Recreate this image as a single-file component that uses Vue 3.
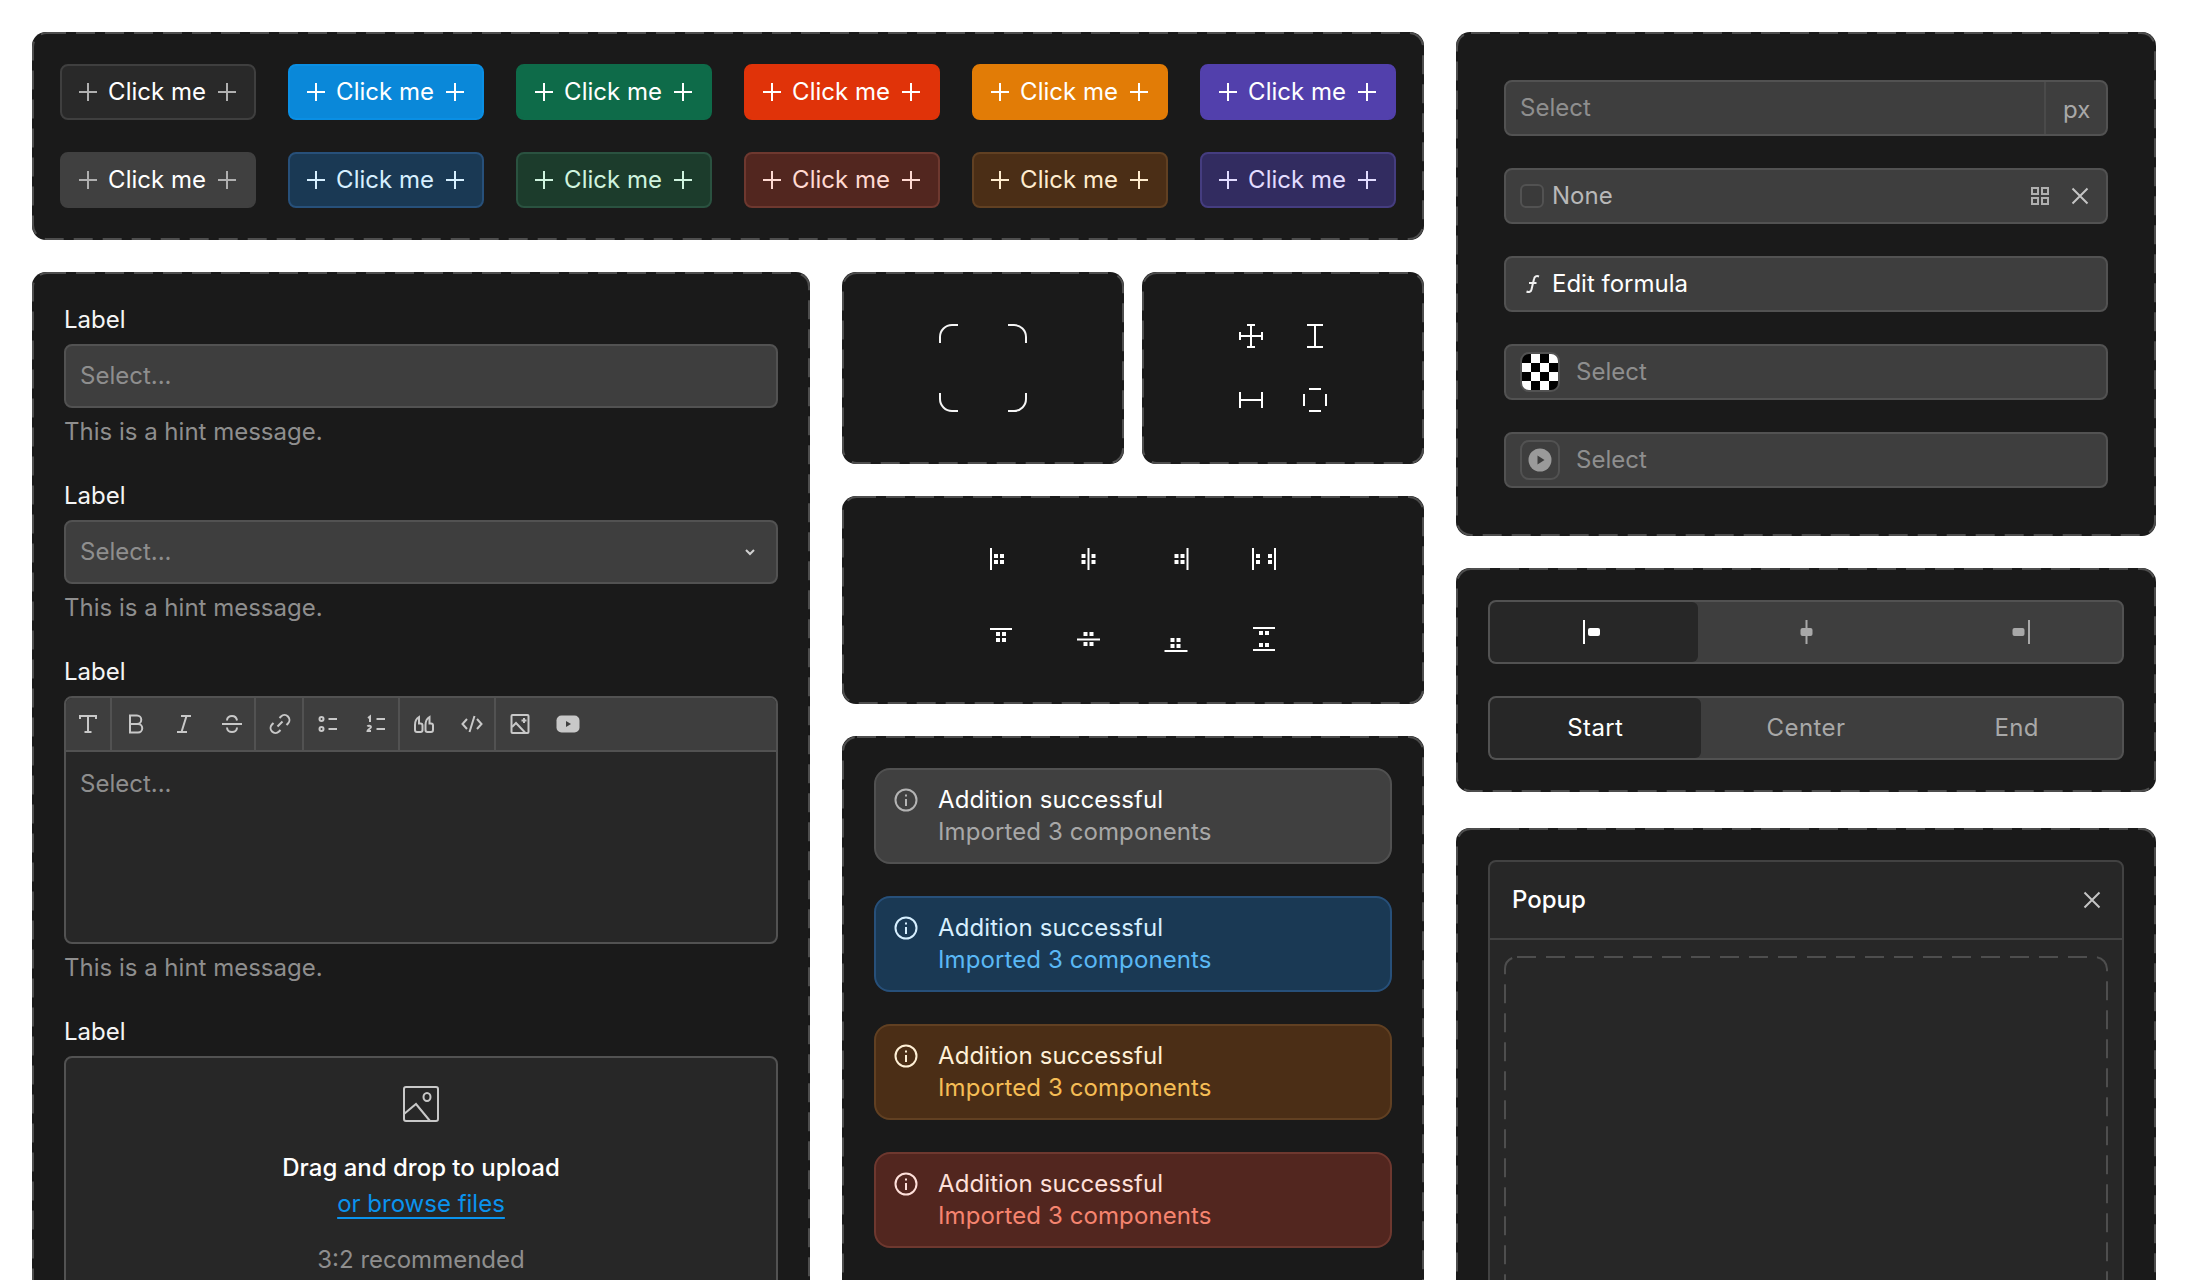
<template>
  <div class="page">
    <div class="main">
      <section class="card buttons">
        <svg class="dash"><rect /></svg>
        <button v-for="b in buttons" :key="b.id" class="btn" :class="b.cls">
          <svg class="plus" viewBox="0 0 24 24"><path d="M12 3v18M3 12h18" /></svg>
          <span>Click me</span>
          <svg class="plus" viewBox="0 0 24 24"><path d="M12 3v18M3 12h18" /></svg>
        </button>
      </section>

      <div class="lower">
        <section class="card form">
          <svg class="dash"><rect /></svg>

          <div class="field">
            <div class="label">Label</div>
            <div class="input placeholder">Select...</div>
            <div class="hint">This is a hint message.</div>
          </div>

          <div class="field">
            <div class="label">Label</div>
            <div class="input placeholder">
              Select...
              <svg class="caret" viewBox="0 0 12 12"><path d="M2 4l4 4 4-4" /></svg>
            </div>
            <div class="hint">This is a hint message.</div>
          </div>

          <div class="field">
            <div class="label">Label</div>
            <div class="editor">
              <div class="toolbar">
                <div class="tool-group">
                  <svg class="tool" viewBox="0 0 24 24"><path d="M4 7V4h16v3M12 4v16M8.500 20h7" /></svg>
                </div>
                <div class="tool-group">
                  <svg class="tool" viewBox="0 0 24 24"><path d="M6 3.500h7a4.200 4.200 0 0 1 0 8.500H6zM6 12h8a4.200 4.200 0 0 1 0 8.500H6z" /></svg>
                  <svg class="tool" viewBox="0 0 24 24"><path d="M9 4h10M5 20h10M14.500 4L9.500 20" /></svg>
                  <svg class="tool" viewBox="0 0 24 24"><path d="M2 12h20M17 8.500C16.500 5.500 14.500 4 12 4S7 5.500 7 8.500M7 15.500c0 3 2.500 4.500 5 4.500s5-1.500 5-4.500" /></svg>
                </div>
                <div class="tool-group">
                  <svg class="tool" viewBox="0 0 24 24"><path d="M11.500 6l1.500-1.500a4.950 4.950 0 0 1 7 7L18.500 13M12.500 18L11 19.500a4.950 4.950 0 0 1-7-7L5.500 11M9.500 14.500l5-5" /></svg>
                </div>
                <div class="tool-group">
                  <svg class="tool" viewBox="0 0 24 24"><circle cx="5.500" cy="7" r="2" /><circle cx="5.500" cy="17" r="2" /><path d="M12.500 7H21M12.500 17H21" /></svg>
                  <svg class="tool" viewBox="0 0 24 24"><path d="M4 6l2-1.500V10M3.500 14.500c.5-1 3.500-1 3.500.5 0 1.500-3.500 2.500-3.500 4H7M12.500 7H21M12.500 17H21" /></svg>
                </div>
                <div class="tool-group">
                  <svg class="tool" viewBox="0 0 24 24"><path d="M3 13c0-3.500 1.500-6.500 4-8v6.500h1.500a2 2 0 0 1 2 2v4.500a2 2 0 0 1-2 2H5a2 2 0 0 1-2-2zM13.500 13c0-3.500 1.500-6.500 4-8v6.500H19a2 2 0 0 1 2 2v4.500a2 2 0 0 1-2 2h-3.500a2 2 0 0 1-2-2z" /></svg>
                  <svg class="tool" viewBox="0 0 24 24"><path d="M7 7l-4.500 5L7 17M14.500 4L9.500 20M17 7l4.500 5-4.500 5" /></svg>
                </div>
                <div class="tool-group">
                  <svg class="tool" viewBox="0 0 24 24"><rect x="3.500" y="3" width="17" height="18" rx="1" /><path d="M4 15l4-4 9 9.500M16 6v5M13.500 8.500h5" /></svg>
                  <svg class="tool" viewBox="0 0 24 24"><rect class="solid" x="0.500" y="3.500" width="23" height="17" rx="5" /><path class="gap" d="M10 9v6l5-3z" /></svg>
                </div>
              </div>
              <div class="editor-body placeholder">Select...</div>
            </div>
            <div class="hint">This is a hint message.</div>
          </div>

          <div class="field">
            <div class="label">Label</div>
            <div class="upload">
              <svg class="upload-icon" viewBox="0 0 36 36">
                <rect x="1" y="1" width="34" height="34" rx="2" />
                <ellipse cx="24" cy="11" rx="3.500" ry="4" />
                <path d="M1 28l12-10 14 17" />
              </svg>
              <div class="upload-title">Drag and drop to upload</div>
              <a class="upload-link">or browse files</a>
              <div class="upload-note">3:2 recommended</div>
            </div>
          </div>
        </section>

        <div class="middle">
          <div class="icon-cards">
            <section class="card center-card">
              <svg class="dash"><rect /></svg>
              <svg class="corners" viewBox="0 0 88 88">
                <path d="M1 19V13A12 12 0 0 1 13 1h6M69 1h6a12 12 0 0 1 12 12v6M1 69v6a12 12 0 0 0 12 12h6M69 87h6a12 12 0 0 0 12-12v-6" />
              </svg>
            </section>
            <section class="card center-card">
              <svg class="dash"><rect /></svg>
              <div class="cursors">
                <svg viewBox="0 0 24 24"><path d="M8 1h8M12 1v22M8 23h8M1 8v8M1 12h22M23 8v8" /></svg>
                <svg viewBox="0 0 24 24"><path d="M4 1h16M12 1v22M4 23h16" /></svg>
                <svg viewBox="0 0 24 24"><path d="M1 4v16M1 12h22M23 4v16" /></svg>
                <svg viewBox="0 0 24 24"><path d="M6 1h12M6 23h12M1 6v12M23 6v12" /></svg>
              </div>
            </section>
          </div>

          <section class="card center-card align-card">
            <svg class="dash"><rect /></svg>
            <div class="aligns">
              <svg v-for="(icon, i) in alignIcons" :key="i" viewBox="0 0 24 24">
                <rect v-for="(r, j) in icon" :key="j" :x="r[0]" :y="r[1]" :width="r[2]" :height="r[3]" />
              </svg>
            </div>
          </section>

          <section class="card alerts">
            <svg class="dash"><rect /></svg>
            <div v-for="a in alerts" :key="a" class="alert" :class="a">
              <svg class="alert-icon" viewBox="0 0 24 24">
                <circle cx="12" cy="12" r="10.500" />
                <path d="M12 11v7M12 6.500v2" />
              </svg>
              <div>
                <div class="alert-title">Addition successful</div>
                <div class="alert-sub">Imported 3 components</div>
              </div>
            </div>
          </section>
        </div>
      </div>
    </div>

    <div class="side">
      <section class="card settings">
        <svg class="dash"><rect /></svg>

        <div class="row placeholder">
          <span class="grow">Select</span>
          <span class="unit">px</span>
        </div>

        <div class="row none">
          <span class="check"></span>
          <span class="grow">None</span>
          <svg class="small-icon grid-icon" viewBox="0 0 18 18">
            <rect x="1" y="1" width="6" height="6" />
            <rect x="11" y="1" width="6" height="6" />
            <rect x="1" y="11" width="6" height="6" />
            <rect x="11" y="11" width="6" height="6" />
          </svg>
          <svg class="small-icon close-icon" viewBox="0 0 18 18"><path d="M1.500 1.500l15 15M16.500 1.500l-15 15" /></svg>
        </div>

        <div class="row formula">
          <svg class="f-icon" viewBox="0 0 24 24"><path d="M19 4.500c-2.500-1-4.500 0-5 2.500l-2.500 10.500c-.5 2.500-2.500 3-5 2M9 11h7.500" /></svg>
          <span>Edit formula</span>
        </div>

        <div class="row placeholder thumb-row">
          <span class="thumb checker"></span>
          <span>Select</span>
        </div>

        <div class="row placeholder thumb-row">
          <span class="thumb">
            <svg class="play" viewBox="0 0 24 24"><circle cx="12" cy="12" r="11.500" /><path d="M9.500 7.500v9l7-4.500z" /></svg>
          </span>
          <span>Select</span>
        </div>
      </section>

      <section class="card segments">
        <svg class="dash"><rect /></svg>
        <div class="seg seg-icons">
          <div class="seg-item active">
            <svg viewBox="0 0 24 24"><rect x="1" y="0" width="2" height="24" /><rect x="6" y="8" width="12" height="8" rx="2" /></svg>
          </div>
          <div class="seg-item">
            <svg viewBox="0 0 24 24"><rect x="11.500" y="0" width="2" height="24" /><rect x="6.500" y="8" width="12" height="8" rx="2" /></svg>
          </div>
          <div class="seg-item">
            <svg viewBox="0 0 24 24"><rect x="22" y="0" width="2" height="24" /><rect x="6.500" y="8" width="12" height="8" rx="2" /></svg>
          </div>
        </div>
        <div class="seg">
          <div class="seg-item active">Start</div>
          <div class="seg-item">Center</div>
          <div class="seg-item">End</div>
        </div>
      </section>

      <section class="card popup-card">
        <svg class="dash"><rect /></svg>
        <div class="popup">
          <div class="popup-head">
            <span>Popup</span>
            <svg class="small-icon close-icon" viewBox="0 0 18 18"><path d="M1.500 1.500l15 15M16.500 1.500l-15 15" /></svg>
          </div>
          <div class="popup-body">
            <svg class="dash slot"><rect /></svg>
          </div>
        </div>
      </section>
    </div>
  </div>
</template>

<script setup>
const colors = ['plain', 'blue', 'green', 'red', 'orange', 'purple']

const buttons = [
  ...colors.map((c) => ({ id: c, cls: c })),
  ...colors.map((c) => ({ id: c + '-soft', cls: c + '-soft' }))
]

const alerts = ['gray', 'note', 'warn', 'error']

// each rect is x, y, w, h inside a 24 box
const alignIcons = [
  [[1, 0, 2, 22], [5, 6, 4, 4], [11, 6, 4, 4], [5, 12, 4, 4], [11, 12, 4, 4]],
  [[10.5, 0, 2, 22], [4.5, 6, 4, 4], [14.5, 6, 4, 4], [4.5, 12, 4, 4], [14.5, 12, 4, 4]],
  [[21.5, 0, 2, 22], [9.5, 6, 4, 4], [15.5, 6, 4, 4], [9.5, 12, 4, 4], [15.5, 12, 4, 4]],
  [[-1, 0, 2, 22], [3, 6, 4, 4], [15, 6, 4, 4], [3, 12, 4, 4], [15, 12, 4, 4], [21, 0, 2, 22]],
  [[1, 0, 22, 2], [7, 4, 4, 4], [13, 4, 4, 4], [7, 10, 4, 4], [13, 10, 4, 4]],
  [[0, 10.5, 23, 2], [6.5, 4, 4, 4], [12.5, 4, 4, 4], [6.5, 14, 4, 4], [12.5, 14, 4, 4]],
  [[-0.5, 22, 23, 2], [5.5, 10, 4, 4], [11.5, 10, 4, 4], [5.5, 16, 4, 4], [11.5, 16, 4, 4]],
  [[0, -1, 22, 2], [6, 3, 4, 4], [12, 3, 4, 4], [6, 15, 4, 4], [12, 15, 4, 4], [0, 21, 22, 2]]
]
</script>

<style>
html,
body {
  margin: 0;
  background: #fff;
}
</style>

<style scoped>
.page {
  display: flex;
  gap: 32px;
  width: 2188px;
  height: 1280px;
  padding: 32px;
  box-sizing: border-box;
  overflow: hidden;
  font-family: Inter, "Noto Sans", sans-serif;
  font-size: 24px;
  line-height: 32px;
  color: #f5f5f5;
}

.main {
  display: flex;
  flex-direction: column;
  gap: 32px;
  width: 1392px;
  flex-shrink: 0;
}

.side {
  display: flex;
  flex-direction: column;
  gap: 32px;
  width: 700px;
  flex-shrink: 0;
}

.card {
  position: relative;
  box-sizing: border-box;
  background: #1a1a1a;
  border-radius: 14px;
}

.dash {
  position: absolute;
  inset: 0;
  width: 100%;
  height: 100%;
  pointer-events: none;
}

.dash rect {
  x: 1px;
  y: 1px;
  width: calc(100% - 2px);
  height: calc(100% - 2px);
  rx: 14px;
  fill: none;
  stroke: #4e4e4e;
  stroke-width: 2;
  stroke-dasharray: 19 10;
}

/* buttons */
.buttons {
  display: grid;
  grid-template-columns: repeat(6, 196px);
  gap: 32px;
  padding: 32px 28px;
}

.btn {
  display: flex;
  align-items: center;
  justify-content: space-between;
  height: 56px;
  padding: 0 15px 0 14px;
  box-sizing: border-box;
  border: 2px solid transparent;
  border-radius: 8px;
  font: inherit;
  color: #fff;
}

.btn span {
  margin-right: 1px;
}

.plus {
  width: 24px;
  height: 24px;
  fill: none;
  stroke: currentColor;
  stroke-width: 2;
}

.plain { background: #292929; border-color: #3f3f3f; }
.plain .plus, .plain-soft .plus { color: #b0b0b0; }
.blue { background: #0a88d9; border-color: #0a8fe4; }
.green { background: #0e6b49; border-color: #0e6b49; }
.red { background: #e03309; border-color: #e03309; }
.orange { background: #e27c06; border-color: #e27c06; }
.purple { background: #5240ac; border-color: #5240ac; }
.plain-soft { background: #404040; border-color: #404040; }
.blue-soft { background: #1a3954; border-color: #27507a; color: #d6efff; }
.green-soft { background: #1c3c2c; border-color: #2a5240; color: #cff3df; }
.red-soft { background: #52261f; border-color: #6e382f; color: #ffd9d2; }
.orange-soft { background: #4b2e16; border-color: #614022; color: #ffeccf; }
.purple-soft { background: #322c60; border-color: #453d80; color: #e2dcff; }

/* form */
.lower {
  display: flex;
  gap: 32px;
  flex: 1;
}

.form {
  width: 778px;
  flex-shrink: 0;
  padding: 32px;
  display: flex;
  flex-direction: column;
  gap: 32px;
}

.label {
  margin-bottom: 8px;
}

.hint {
  margin-top: 8px;
  color: #8e8e8e;
}

.placeholder {
  color: #8e8e8e;
}

.input {
  display: flex;
  align-items: center;
  justify-content: space-between;
  height: 64px;
  padding: 0 14px;
  box-sizing: border-box;
  background: #3e3e3e;
  border: 2px solid #525252;
  border-radius: 8px;
}

.caret {
  width: 12px;
  height: 12px;
  margin-right: 6px;
  fill: none;
  stroke: #d0d0d0;
  stroke-width: 2;
}

.editor {
  border: 2px solid #525252;
  border-radius: 8px;
  overflow: hidden;
  background: #272727;
}

.toolbar {
  display: flex;
  height: 52px;
  background: #3e3e3e;
  border-bottom: 2px solid #525252;
}

.tool-group {
  display: flex;
  align-items: center;
  box-shadow: inset -2px 0 #525252;
}

.tool-group:last-child {
  box-shadow: none;
}

.tool {
  width: 24px;
  height: 24px;
  margin: 0 12px;
  fill: none;
  stroke: #c8c8c8;
  stroke-width: 2;
}

.tool-group:first-child .tool {
  margin-left: 10px;
}

.tool .solid {
  fill: #c8c8c8;
  stroke: none;
}

.tool .gap {
  fill: #3e3e3e;
  stroke: none;
}

.editor-body {
  height: 190px;
  padding: 16px 14px;
  box-sizing: border-box;
}

.upload {
  display: flex;
  flex-direction: column;
  align-items: center;
  padding: 28px 14px 60px;
  background: #272727;
  border: 2px solid #525252;
  border-radius: 8px;
}

.upload-icon {
  width: 36px;
  height: 36px;
  fill: none;
  stroke: #c8c8c8;
  stroke-width: 2;
}

.upload-title {
  margin-top: 30px;
  font-weight: 500;
  color: #fff;
}

.upload-link {
  margin-top: 4px;
  color: #0a93ee;
  text-decoration: underline;
  text-decoration-thickness: 2px;
  text-underline-offset: 5px;
}

.upload-note {
  margin-top: 24px;
  color: #8e8e8e;
}

/* middle */
.middle {
  flex: 1;
  display: flex;
  flex-direction: column;
  gap: 32px;
}

.icon-cards {
  display: flex;
  gap: 18px;
}

.center-card {
  flex: 1;
  height: 192px;
  display: flex;
  align-items: center;
  justify-content: center;
}

.corners {
  width: 88px;
  height: 88px;
  fill: none;
  stroke: #f5f5f5;
  stroke-width: 2;
}

.cursors {
  display: grid;
  grid-template-columns: repeat(2, 24px);
  gap: 40px;
}

.cursors svg {
  width: 24px;
  height: 24px;
  overflow: visible;
  fill: none;
  stroke: #fff;
  stroke-width: 2;
}

.align-card {
  flex: none;
  height: 208px;
}

.aligns {
  display: grid;
  grid-template-columns: repeat(4, 24px);
  column-gap: 64px;
  row-gap: 56px;
}

.aligns svg {
  width: 24px;
  height: 24px;
  overflow: visible;
  fill: #fff;
}

.alerts {
  flex: 1;
  display: flex;
  flex-direction: column;
  gap: 32px;
  padding: 32px;
  min-height: 600px;
}

.alert {
  display: flex;
  gap: 20px;
  height: 96px;
  padding: 14px 18px;
  box-sizing: border-box;
  border: 2px solid;
  border-radius: 16px;
  letter-spacing: 0.1px;
}

.alert-icon {
  flex-shrink: 0;
  width: 24px;
  height: 24px;
  margin-top: 4px;
  fill: none;
  stroke: currentColor;
  stroke-width: 2;
}

.gray { background: #404040; border-color: #515151; color: #fff; }
.gray .alert-icon { color: #b4b4b4; }
.gray .alert-sub { color: #a8a8a8; }
.note { background: #1a3954; border-color: #27507a; color: #d6efff; }
.note .alert-sub { color: #5ab8f5; }
.warn { background: #4b2e16; border-color: #614022; color: #fff0d6; }
.warn .alert-sub { color: #f5bd55; }
.error { background: #52261f; border-color: #6e382f; color: #ffe0da; }
.error .alert-sub { color: #f6846f; }

/* settings */
.settings {
  display: flex;
  flex-direction: column;
  gap: 32px;
  padding: 48px;
}

.row {
  display: flex;
  align-items: center;
  height: 56px;
  padding: 0 14px;
  box-sizing: border-box;
  background: #3e3e3e;
  border: 2px solid #525252;
  border-radius: 8px;
}

.grow {
  flex: 1;
}

.unit {
  align-self: stretch;
  display: flex;
  align-items: center;
  width: 62px;
  margin-right: -14px;
  padding: 4px 0 0 17px;
  box-sizing: border-box;
  border-left: 2px solid #4a4a4a;
  color: #a8a8a8;
}

.none {
  color: #b8b8b8;
  gap: 8px;
}

.check {
  width: 24px;
  height: 24px;
  box-sizing: border-box;
  border: 2px solid #525252;
  border-radius: 6px;
  background: #3a3a3a;
}

.small-icon {
  flex-shrink: 0;
  width: 18px;
  height: 18px;
  fill: none;
  stroke-width: 2;
}

.grid-icon {
  stroke: #b0b0b0;
  margin-right: 14px;
}

.close-icon {
  stroke: #c4c4c4;
  margin-right: 3px;
}

.formula {
  color: #fff;
  gap: 8px;
}

.f-icon {
  width: 24px;
  height: 24px;
  fill: none;
  stroke: #f0f0f0;
  stroke-width: 2;
}

.thumb-row {
  gap: 16px;
}

.thumb {
  display: flex;
  align-items: center;
  justify-content: center;
  width: 40px;
  height: 40px;
  box-sizing: border-box;
  border: 2px solid #525252;
  border-radius: 9px;
  overflow: hidden;
}

.checker {
  background: conic-gradient(#fff 25%, #000 0 50%, #fff 0 75%, #000 0) 0 0 / 18px 18px;
}

.play {
  width: 24px;
  height: 24px;
  fill: #9a9a9a;
}

.play path {
  fill: #3e3e3e;
}

/* segmented */
.segments {
  display: flex;
  flex-direction: column;
  gap: 32px;
  padding: 32px;
}

.seg {
  display: grid;
  grid-template-columns: repeat(3, 1fr);
  height: 64px;
  box-sizing: border-box;
  background: #3e3e3e;
  border: 2px solid #525252;
  border-radius: 8px;
  color: #a8a8a8;
  letter-spacing: 0.4px;
  overflow: hidden;
}

.seg-icons {
  grid-template-columns: 208px 215px 1fr;
}

.seg-item {
  display: flex;
  align-items: center;
  justify-content: center;
}

.seg-item svg {
  width: 24px;
  height: 24px;
  overflow: visible;
  fill: #a8a8a8;
}

.seg-item.active {
  background: #272727;
  color: #fff;
  border-radius: 6px;
}

.seg-item.active svg {
  fill: #fff;
}

/* popup */
.popup-card {
  flex: 1;
  margin-top: 4px;
  min-height: 600px;
  padding: 32px;
}

.popup {
  background: #272727;
  border: 2px solid #424242;
  border-radius: 8px;
}

.popup-head {
  display: flex;
  align-items: center;
  justify-content: space-between;
  height: 78px;
  padding: 0 21px 0 22px;
  box-sizing: border-box;
  border-bottom: 2px solid #424242;
  font-weight: 500;
  color: #fff;
}

.popup-head .close-icon {
  margin-right: 0;
}

.popup-body {
  height: 600px;
  padding: 16px 14px;
  box-sizing: border-box;
  position: relative;
}

.slot {
  inset: 16px 14px;
  width: calc(100% - 28px);
  height: calc(100% - 32px);
}

.slot rect {
  rx: 12px;
}
</style>
